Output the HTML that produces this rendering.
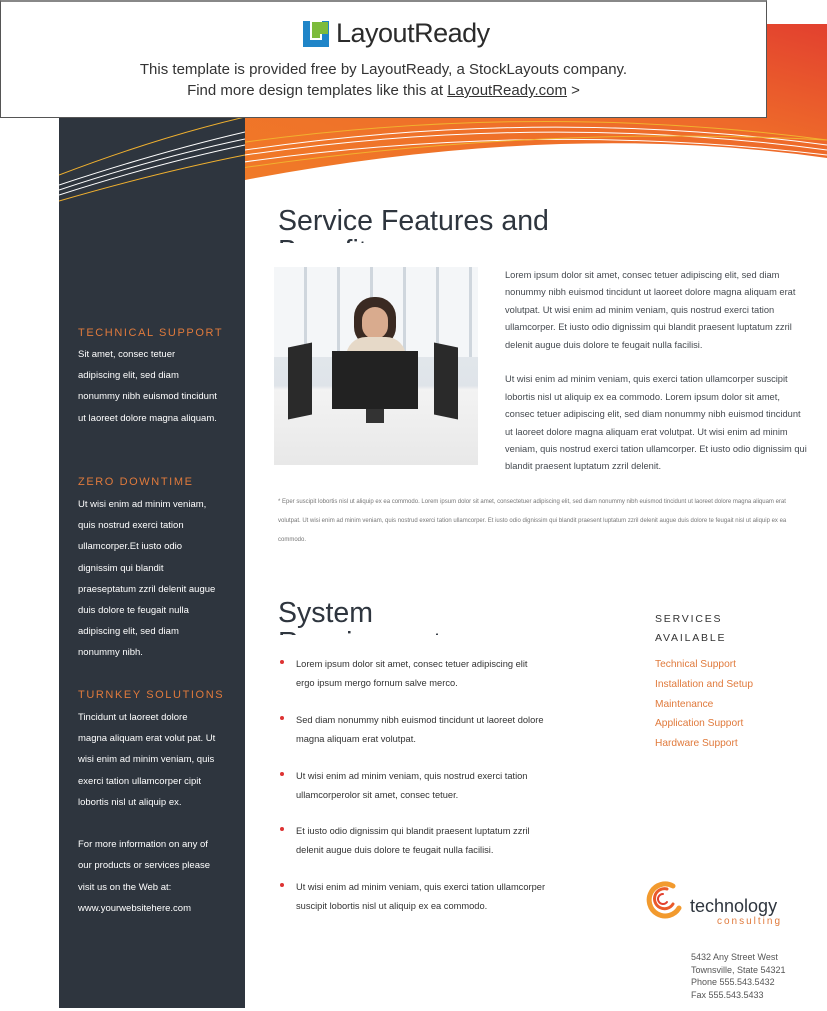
<!DOCTYPE html>
<html><head><meta charset="utf-8"><style>
*{margin:0;padding:0;box-sizing:border-box}
body{width:827px;height:1011px;position:relative;background:#fff;font-family:"Liberation Sans",sans-serif;overflow:hidden}
.a{position:absolute}
.side{left:59px;top:117px;width:186px;height:891px;background:#2e353e}
.sh{color:#e07a3c;font-size:11px;letter-spacing:1.6px;left:78px}
.st{color:#fff;font-size:9.5px;line-height:21.2px;left:78px;width:140px}
.body{color:#454a50;font-size:9.3px;line-height:17.4px}
h1{font-weight:normal;color:#2e353e;font-size:28.5px;line-height:30px;overflow:hidden}
.bul{left:296px;width:252px;color:#333;font-size:9.3px;line-height:18.5px}
.bul:before{content:"";position:absolute;left:-16px;top:5px;width:4px;height:4px;border-radius:2px;background:#d33}
.svc{left:655px;color:#e07a3c;font-size:10.2px;line-height:19.8px}
</style></head><body>
<svg class="a" style="left:0;top:0" width="827" height="260">
<defs><linearGradient id="g" x1="0" y1="1" x2="1" y2="0"><stop offset="0" stop-color="#f07a28"/><stop offset="0.6" stop-color="#ee6a2a"/><stop offset="1" stop-color="#e2402f"/></linearGradient></defs>
<path d="M245 24 L827 24 L827 158 Q560 120 245 180 Z" fill="url(#g)"/>
<path d="M59 175 Q450 90 827 140" stroke="#f1b12f" fill="none" stroke-width="1"/>
<path d="M59 185 Q450 95 827 145" stroke="#fff" fill="none" stroke-width="1"/>
<path d="M59 190 Q450 100 827 150" stroke="#fff" fill="none" stroke-width="1"/>
<path d="M59 195 Q450 110 827 155" stroke="#fff" fill="none" stroke-width="1"/>
<path d="M59 200 Q450 120 827 140" stroke="#f1b12f" fill="none" stroke-width="1"/>
</svg>
<div class="a side"></div>
<svg class="a" style="left:59px;top:117px" width="186" height="90">
<path d="M0 58 Q100 20 186 0" stroke="#f1b12f" fill="none"/>
<path d="M0 68 Q100 35 186 15" stroke="#fff" fill="none"/>
<path d="M0 73 Q100 40 186 22" stroke="#fff" fill="none"/>
<path d="M0 78 Q100 46 186 28" stroke="#fff" fill="none"/>
<path d="M0 84 Q100 55 186 38" stroke="#f1b12f" fill="none"/>
</svg>
<div class="a" style="left:0;top:0;width:767px;height:118px;background:#fff;border:1px solid #555;border-top:2px solid #888"></div>
<div class="a" style="left:303px;top:21px;width:26px;height:26px;background:#1f85c8"></div>
<div class="a" style="left:310px;top:21px;width:12px;height:19px;background:#fff"></div>
<div class="a" style="left:312px;top:22px;width:16px;height:12px;background:#7dbb3c"></div>
<div class="a" style="left:312px;top:22px;width:8px;height:16px;background:#7dbb3c"></div>
<div class="a" style="left:336px;top:18px;font-size:27px;color:#2b2b2b;letter-spacing:-0.5px">LayoutReady</div>
<div class="a" style="left:0;width:767px;top:59px;text-align:center;font-size:15px;line-height:21px;color:#333">This template is provided free by LayoutReady, a StockLayouts company.<br>Find more design templates like this at <u>LayoutReady.com</u> &gt;</div>
<h1 class="a" style="left:278px;top:206px;width:320px;height:37px">Service Features and Benefits</h1>
<div class="a" style="left:274px;top:267px;width:204px;height:198px;background:linear-gradient(#e9edf1,#dfe4e9 60%,#f3f3f3 62%,#e8e8e8)">
<div class="a" style="left:0;top:0;width:204px;height:90px;background:repeating-linear-gradient(90deg,#f4f6f8 0 30px,#cfd6dd 30px 33px)"></div>
<div class="a" style="left:80px;top:30px;width:42px;height:50px;border-radius:20px;background:#3a2a22"></div>
<div class="a" style="left:88px;top:40px;width:26px;height:32px;border-radius:13px;background:#d9ab8e"></div>
<div class="a" style="left:72px;top:70px;width:60px;height:40px;border-radius:20px 20px 0 0;background:#e6d9c8"></div>
<div class="a" style="left:58px;top:84px;width:86px;height:58px;background:#222"></div>
<div class="a" style="left:92px;top:142px;width:18px;height:14px;background:#333"></div>
<div class="a" style="left:14px;top:78px;width:24px;height:72px;background:#2a2a2a;transform:skewY(-12deg)"></div>
<div class="a" style="left:160px;top:78px;width:24px;height:72px;background:#2a2a2a;transform:skewY(12deg)"></div>
</div>
<div class="a body" style="left:505px;top:267px;width:305px">Lorem ipsum dolor sit amet, consec tetuer adipiscing elit, sed diam nonummy nibh euismod tincidunt ut laoreet dolore magna aliquam erat volutpat. Ut wisi enim ad minim veniam, quis nostrud exerci tation ullamcorper. Et iusto odio dignissim qui blandit praesent luptatum zzril delenit augue duis dolore te feugait nulla facilisi.<br><br>Ut wisi enim ad minim veniam, quis exerci tation ullamcorper suscipit lobortis nisl ut aliquip ex ea commodo. Lorem ipsum dolor sit amet, consec tetuer adipiscing elit, sed diam nonummy nibh euismod tincidunt ut laoreet dolore magna aliquam erat volutpat. Ut wisi enim ad minim veniam, quis nostrud exerci tation ullamcorper. Et iusto odio dignissim qui blandit praesent luptatum zzril delenit.</div>
<div class="a" style="left:278px;top:493px;width:520px;font-size:6px;line-height:19px;color:#777">* Eper suscipit lobortis nisl ut aliquip ex ea commodo. Lorem ipsum dolor sit amet, consectetuer adipiscing elit, sed diam nonummy nibh euismod tincidunt ut laoreet dolore magna aliquam erat volutpat. Ut wisi enim ad minim veniam, quis nostrud exerci tation ullamcorper. Et iusto odio dignissim qui blandit praesent luptatum zzril delenit augue duis dolore te feugait nisl ut aliquip ex ea commodo.</div>
<h1 class="a" style="left:278px;top:598px;width:200px;height:37px">System Requirements</h1>
<div class="a bul" style="top:655px">Lorem ipsum dolor sit amet, consec tetuer adipiscing elit ergo ipsum mergo fornum salve merco.</div>
<div class="a bul" style="top:711px">Sed diam nonummy nibh euismod tincidunt ut laoreet dolore magna aliquam erat volutpat.</div>
<div class="a bul" style="top:767px">Ut wisi enim ad minim veniam, quis nostrud exerci tation ullamcorperolor sit amet, consec tetuer.</div>
<div class="a bul" style="top:822px">Et iusto odio dignissim qui blandit praesent luptatum zzril delenit augue duis dolore te feugait nulla facilisi.</div>
<div class="a bul" style="top:878px">Ut wisi enim ad minim veniam, quis exerci tation ullamcorper suscipit lobortis nisl ut aliquip ex ea commodo.</div>
<div class="a" style="left:655px;top:610px;font-size:10.5px;letter-spacing:1.8px;line-height:19px;color:#333">SERVICES<br>AVAILABLE</div>
<div class="a svc" style="top:655px">Technical Support<br>Installation and Setup<br>Maintenance<br>Application Support<br>Hardware Support</div>
<svg class="a" style="left:643px;top:880px" width="42" height="42"><g fill="none" stroke-linecap="round"><path d="M30 6 A16 16 0 1 0 36 28" stroke="#f29a2e" stroke-width="5"/><path d="M24 9 A10 10 0 1 0 30 24" stroke="#ea5a2a" stroke-width="3"/><path d="M20 14 A5 5 0 1 0 24 22" stroke="#e2402f" stroke-width="2"/></g></svg>
<div class="a" style="left:690px;top:896px;font-size:18px;color:#2e353e">technology</div>
<div class="a" style="left:717px;top:916px;font-size:10px;letter-spacing:2px;color:#e07a3c">consulting</div>
<div class="a" style="left:691px;top:951px;font-size:9px;line-height:12.5px;color:#555">5432 Any Street West<br>Townsville, State 54321<br>Phone 555.543.5432<br>Fax 555.543.5433</div>
<div class="a sh" style="top:327px">TECHNICAL SUPPORT</div>
<div class="a st" style="top:344px">Sit amet, consec tetuer adipiscing elit, sed diam nonummy nibh euismod tincidunt ut laoreet dolore magna aliquam.</div>
<div class="a sh" style="top:476px">ZERO DOWNTIME</div>
<div class="a st" style="top:494px">Ut wisi enim ad minim veniam, quis nostrud exerci tation ullamcorper.Et iusto odio dignissim qui blandit praeseptatum zzril delenit augue duis dolore te feugait nulla adipiscing elit, sed diam nonummy nibh.</div>
<div class="a sh" style="top:689px">TURNKEY SOLUTIONS</div>
<div class="a st" style="top:707px">Tincidunt ut laoreet dolore magna aliquam erat volut pat. Ut wisi enim ad minim veniam, quis exerci tation ullamcorper cipit lobortis nisl ut aliquip ex.<br><br>For more information on any of our products or services please visit us on the Web at:<br>www.yourwebsitehere.com</div>
</body></html>
